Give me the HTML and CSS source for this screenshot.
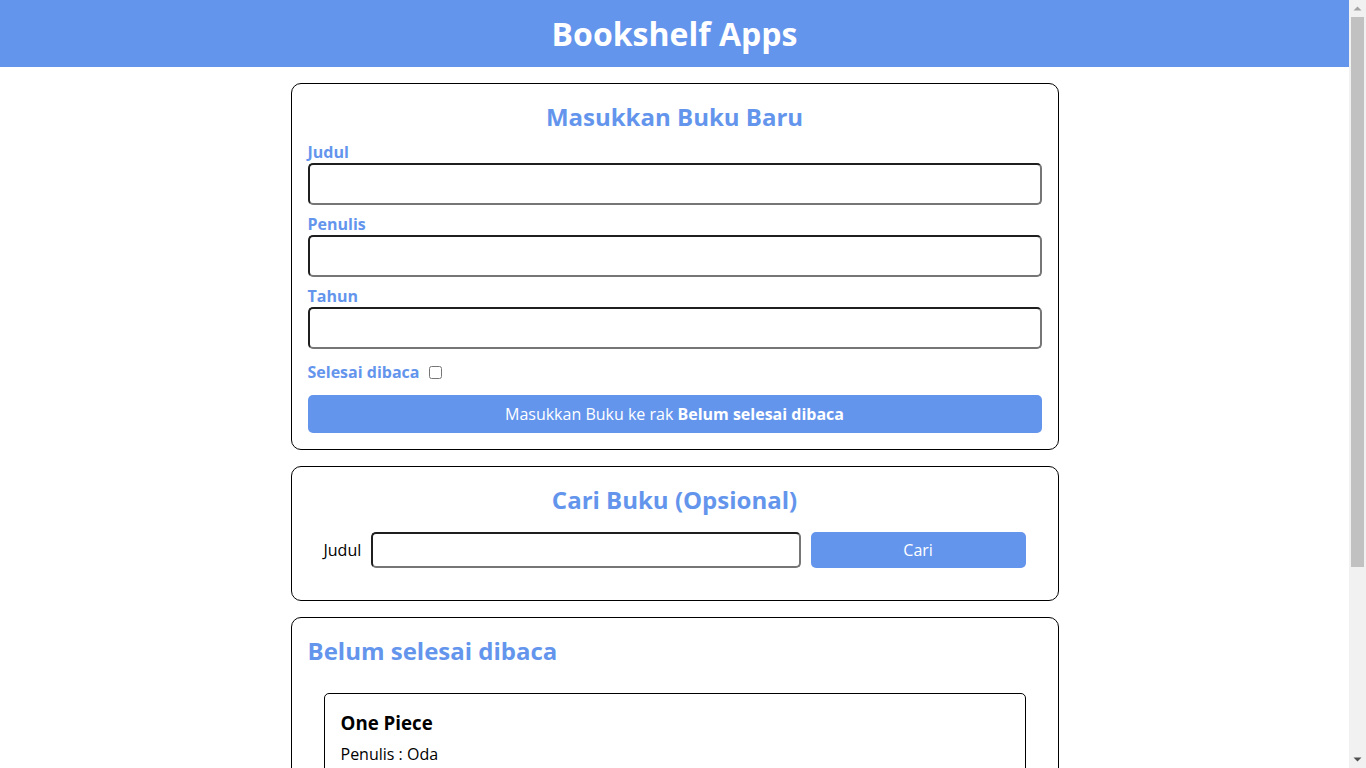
FILE: index.html
```html
<!DOCTYPE html>
<html lang="id">
<head>
<meta charset="utf-8">
<title>Bookshelf Apps</title>
<link rel="stylesheet" href="styles.css">
</head>
<body>
<header class="head-bar">
  <h1 class="app-title">Bookshelf Apps</h1>
</header>
<main class="main">
  <section class="card input-section">
    <h2 class="card-title center">Masukkan Buku Baru</h2>
    <form class="input-form">
      <div class="field">
        <label class="field-label" for="inputBookTitle">Judul</label>
        <input class="text-input" id="inputBookTitle" type="text">
      </div>
      <div class="field">
        <label class="field-label" for="inputBookAuthor">Penulis</label>
        <input class="text-input" id="inputBookAuthor" type="text">
      </div>
      <div class="field">
        <label class="field-label" for="inputBookYear">Tahun</label>
        <input class="text-input" id="inputBookYear" type="number">
      </div>
      <div class="check-row">
        <label class="field-label" for="inputBookIsComplete">Selesai dibaca</label>
        <input class="check" id="inputBookIsComplete" type="checkbox">
      </div>
      <button class="btn-primary" type="button">Masukkan Buku ke rak <b>Belum selesai dibaca</b></button>
    </form>
  </section>

  <section class="card search-section">
    <h2 class="card-title center">Cari Buku (Opsional)</h2>
    <form class="search-form">
      <label class="search-label" for="searchBookTitle">Judul</label>
      <input class="text-input search-input" id="searchBookTitle" type="text">
      <button class="btn-primary search-btn" type="button">Cari</button>
    </form>
  </section>

  <section class="card shelf">
    <h2 class="card-title">Belum selesai dibaca</h2>
    <div class="book-list">
      <article class="book-item">
        <h3 class="book-title">One Piece</h3>
        <p class="book-meta">Penulis : Oda</p>
        <p class="book-meta">Tahun : 1997</p>
        <div class="actions">
          <button class="btn-green" type="button">Selesai dibaca</button>
          <button class="btn-red" type="button">Hapus buku</button>
        </div>
      </article>
    </div>
  </section>

  <section class="card shelf">
    <h2 class="card-title">Selesai dibaca</h2>
    <div class="book-list"></div>
  </section>
</main>

<div class="fake-scrollbar" aria-hidden="true">
  <div class="sb-arrow">
    <svg width="9" height="5" viewBox="0 0 9 5"><path d="M0.5 4.5 L4.5 0.5 L8.5 4.5 Z" fill="#a3a3a3"/></svg>
  </div>
  <div class="sb-thumb"></div>
  <div class="sb-space"></div>
  <div class="sb-arrow">
    <svg width="9" height="5" viewBox="0 0 9 5"><path d="M0.5 0.5 L8.5 0.5 L4.5 4.5 Z" fill="#505050"/></svg>
  </div>
</div>
</body>
</html>
```

FILE: styles.css
```css
* {
  box-sizing: border-box;
}

body {
  margin: 0;
  padding-right: 17px;
  font-family: "Open Sans", "Noto Sans", sans-serif;
  font-size: 16px;
  color: #000;
  background: #fff;
}

.head-bar {
  background: #6495ed;
  color: #fff;
  text-align: center;
  padding: 12px 0 11px;
}

.app-title {
  margin: 0;
  font-size: 32px;
  font-weight: 700;
  line-height: 44px;
}

.main {
  max-width: 768px;
  margin: 16px auto 0;
  padding-bottom: 16px;
}

.card {
  border: 1px solid #000;
  border-radius: 10px;
  padding: 16px;
  margin-bottom: 16px;
}

.card-title {
  margin: 0;
  color: #6495ed;
  font-size: 24px;
  font-weight: 700;
  line-height: 33px;
}

.center {
  text-align: center;
}

.input-form {
  display: flex;
  flex-direction: column;
  margin-top: 8px;
}

.field {
  display: flex;
  flex-direction: column;
  margin-bottom: 8px;
}

.field-label {
  color: #6495ed;
  font-weight: 700;
  line-height: 22px;
}

.text-input {
  font-family: inherit;
  font-size: 16px;
  line-height: 22px;
  padding: 8px;
  border-width: 2px;
  border-style: solid;
  border-color: #1f1f1f #767676 #767676 #1f1f1f;
  border-radius: 5px;
  background: #fff;
  outline: none;
}

.check-row {
  display: flex;
  align-items: center;
  margin-top: 4px;
  margin-bottom: 12px;
}

.check {
  width: 13px;
  height: 13px;
  margin: 0 0 0 10px;
}

.btn-primary {
  font-family: inherit;
  font-size: 16px;
  line-height: 22px;
  padding: 8px;
  border: none;
  border-radius: 5px;
  background: #6495ed;
  color: #fff;
  cursor: pointer;
}

.search-form {
  display: grid;
  grid-template-columns: auto 2fr 1fr;
  align-items: center;
  gap: 10px;
  padding: 16px;
}

.search-label {
  line-height: 22px;
}

.search-input {
  min-width: 0;
  padding: 5px 8px;
}

.search-btn {
  padding: 7px 8px;
}

.book-list {
  padding: 16px;
  padding-top: 26px;
}

.book-item {
  border: 1px solid #000;
  border-radius: 5px;
  padding: 16px;
}

.book-title {
  margin: 0 0 7px;
  font-size: 18.72px;
  font-weight: 700;
  line-height: 26px;
}

.book-meta {
  margin: 0 0 8px;
  line-height: 22px;
}

.actions {
  display: flex;
  gap: 8px;
  margin-top: 8px;
}

.btn-green,
.btn-red {
  font-family: inherit;
  font-size: 16px;
  padding: 8px;
  border: none;
  border-radius: 5px;
  color: #fff;
}

.btn-green {
  background: darkgreen;
}

.btn-red {
  background: darkred;
}

/* Simulated browser scrollbar overlay */
.fake-scrollbar {
  position: fixed;
  top: 0;
  right: 0;
  width: 17px;
  height: 100vh;
  background: #f1f1f1;
  display: flex;
  flex-direction: column;
}

.sb-arrow {
  height: 17px;
  display: flex;
  align-items: center;
  justify-content: center;
  flex: none;
}

.sb-thumb {
  height: 550px;
  margin: 0 2px;
  background: #c1c1c1;
  flex: none;
}

.sb-space {
  flex: 1;
}
```
